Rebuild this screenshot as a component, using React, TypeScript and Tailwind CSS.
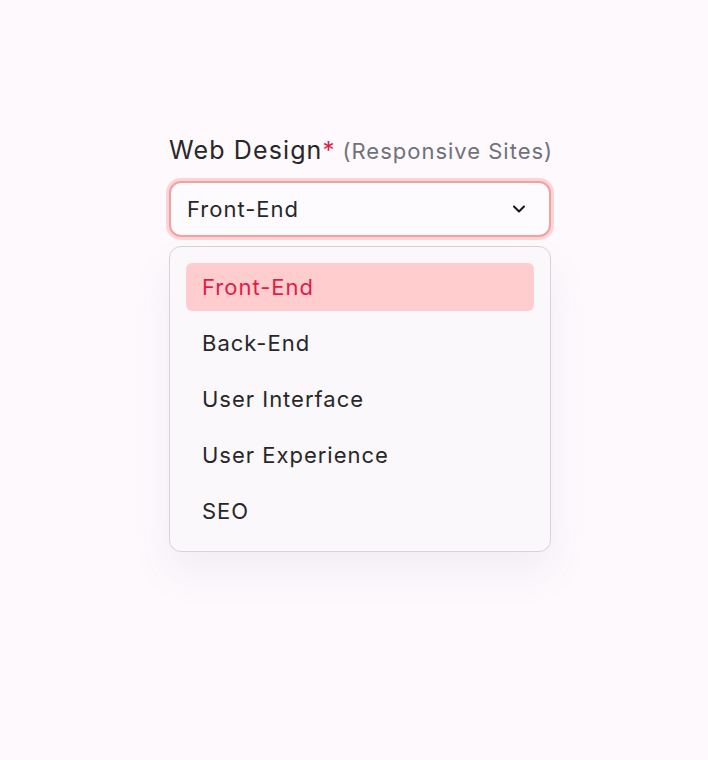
import { ChevronDown } from "lucide-react"

const options = ["Front-End", "Back-End", "User Interface", "User Experience", "SEO"]

export default function App() {
  const selected = "Front-End"

  return (
    <main
      className="min-h-screen bg-[#fdf9fd] flex justify-center pl-[12px] pt-[132px]"
      style={{ fontFamily: "Inter, 'Noto Sans', sans-serif" }}
    >
      <div className="w-[382px]">
        {/* Label */}
        <div className="flex items-baseline whitespace-nowrap">
          <span className="text-[25px] leading-9 tracking-[0.045em] text-[#27272a]">Web Design</span>
          <span className="text-[24px] leading-9 text-[#e11d48]">*</span>
          <span className="ml-[8px] text-[22px] leading-9 tracking-[0.045em] text-[#71717a]">(Responsive Sites)</span>
        </div>

        {/* Select trigger */}
        <button className="mt-[12px] w-full h-14 flex items-center justify-between px-4 rounded-xl bg-[#fefbfe] border-2 border-[#f2a1a1] ring-[3px] ring-[#f9c4c4]/70">
          <span className="text-[22px] tracking-[0.045em] text-[#27272a]">{selected}</span>
          <ChevronDown className="w-5 h-5 text-[#18181b] mr-1" strokeWidth={2.5} />
        </button>

        {/* Listbox */}
        <ul className="mt-[9px] rounded-xl border border-[#d4d4d8] bg-[#faf8fa] p-4 flex flex-col gap-2 shadow-[0_20px_40px_rgba(120,100,130,0.08)]">
          {options.map((opt) => (
            <li
              key={opt}
              className={`h-12 flex items-center px-4 rounded-md text-[22px] tracking-[0.045em] ${
                opt === selected ? "bg-[#ffcdcd] text-[#e11d48]" : "text-[#27272a]"
              }`}
            >
              {opt}
            </li>
          ))}
        </ul>
      </div>
    </main>
  )
}
